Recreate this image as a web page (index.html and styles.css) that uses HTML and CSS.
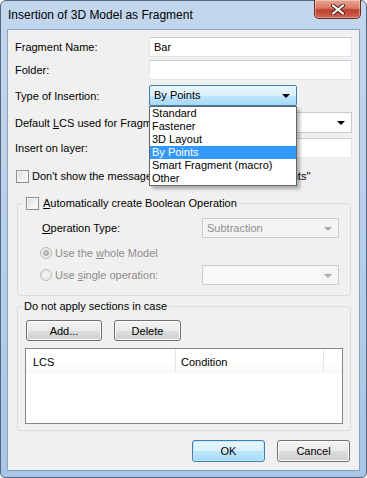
FILE: index.html
```html
<!DOCTYPE html>
<html lang="en">
<head>
  <meta charset="UTF-8" />
  <title>Insertion of 3D Model as Fragment</title>
  <link rel="stylesheet" href="styles.css">
</head>
<body>
  <div class="window">
    <!-- Title bar -->
    <div class="titlebar">
      <span class="title">Insertion of 3D Model as Fragment</span>
      <button class="close" aria-label="Close">
        <svg width="14" height="11" viewBox="0 0 14 11">
          <path d="M2 1.5L12 9.5M12 1.5L2 9.5" stroke="#4a1f1a" stroke-width="4" stroke-linecap="round"/>
          <path d="M2 1.5L12 9.5M12 1.5L2 9.5" stroke="#fff" stroke-width="2.2" stroke-linecap="round"/>
        </svg>
      </button>
    </div>

    <!-- Client area -->
    <div class="client">
      <div class="row r1">
        <label class="lbl">Fragment Name:</label>
        <div class="edit">Bar</div>
      </div>
      <div class="row r2">
        <label class="lbl">Folder:</label>
        <div class="edit"></div>
      </div>
      <div class="row r3">
        <label class="lbl">Type of Insertion:</label>
        <div class="combo-wrap">
          <div class="combo hot">By Points<span class="arrow"></span></div>
          <ul class="droplist">
            <li>Standard</li>
            <li>Fastener</li>
            <li>3D Layout</li>
            <li class="sel">By Points</li>
            <li>Smart Fragment (macro)</li>
            <li>Other</li>
          </ul>
        </div>
      </div>
      <div class="row r4">
        <label class="lbl">Default <u>L</u>CS used for Fragment:</label>
        <div class="combo plain"><span class="arrow"></span></div>
      </div>
      <div class="row r5">
        <label class="lbl">Insert on layer:</label>
        <div class="edit"></div>
      </div>
      <div class="row chkrow">
        <span class="check"></span>
        <span>Don't show the message "Fragment is inserted by points"</span>
      </div>

      <!-- Boolean operation group -->
      <div class="group g1">
        <div class="gtitle"><span class="check"></span><span><u>A</u>utomatically create Boolean Operation</span></div>
        <div class="grow optype">
          <span class="glbl"><u>O</u>peration Type:</span>
          <div class="combo dis">Subtraction<span class="arrow"></span></div>
        </div>
        <div class="grow radrow whole">
          <span class="radio on"></span>
          <span class="glbl2">Use the <u>w</u>hole Model</span>
        </div>
        <div class="grow radrow single">
          <span class="radio"></span>
          <span class="glbl2">Use <u>s</u>ingle operation:</span>
          <div class="combo dis dis2"><span class="field"></span><span class="arrow"></span></div>
        </div>
      </div>

      <!-- Sections group -->
      <div class="group g2">
        <div class="gtitle plain-title">Do not apply sections in case</div>
        <div class="btnrow">
          <button class="btn add">Add...</button>
          <button class="btn del">Delete</button>
        </div>
        <div class="listview">
          <div class="lvhead">
            <span class="col c1">LCS</span>
            <span class="col c2">Condition</span>
            <span class="col c3"></span>
          </div>
        </div>
      </div>

      <div class="footer">
        <button class="btn ok">OK</button>
        <button class="btn">Cancel</button>
      </div>
    </div>
  </div>
</body>
</html>
```

FILE: styles.css
```css
*{box-sizing:border-box;margin:0;padding:0}
body{
  width:367px;height:478px;overflow:hidden;
  font-family:'Liberation Sans',Arial,sans-serif;
  font-size:11px;color:#000;background:#fff;
}
u{text-decoration:underline;text-underline-offset:1px}

/* ── Window frame ─────────────────────────── */
.window{
  width:367px;height:478px;
  display:flex;flex-direction:column;
  border:1px solid #56687f;
  border-radius:6px 6px 5px 5px;
  background:linear-gradient(180deg,#c2d7ee 0,#b9d1ea 40%,#a9c5e6 100%);
}
.titlebar{
  height:28px;flex-shrink:0;
  display:flex;justify-content:space-between;align-items:flex-start;
}
.title{font-size:12px;padding:7px 0 0 7px}
.close{
  width:47px;height:19px;margin:-1px 5px 0 0;
  border:1px solid #6f2a22;border-top:none;
  border-radius:0 0 5px 5px;
  background:linear-gradient(180deg,#e8a493 0,#d97965 45%,#c0402e 55%,#d26450 100%);
  box-shadow:inset 0 0 0 1px rgba(255,255,255,.35);
  display:flex;align-items:center;justify-content:center;
}
.close svg{display:block}

.client{
  flex:1;margin:0 6px 6px 6px;
  border:1px solid #8ca2bd;
  background:#f0f0f0;
  padding:7px 7px 0 7px;
  position:relative;
}

/* ── Form rows ────────────────────────────── */
.row{display:flex;align-items:center}
.lbl{width:134px;flex-shrink:0;white-space:nowrap;overflow:hidden}
.r1{height:20px}
.r2{height:20px;margin-top:3px}
.r3{height:21px;margin-top:5px;position:relative;z-index:5}
.r4{height:21px;margin-top:6px}
.r5{height:20px;margin-top:5px}
.chkrow{height:20px;margin-top:8px;padding-left:1px;gap:3px;white-space:nowrap}

.edit{
  width:203px;height:100%;
  background:#fff;
  border:1px solid #e1e6ec;border-top-color:#c9ced6;
  padding:3px 4px;line-height:13px;
}

.combo{
  position:relative;height:100%;
  border:1px solid #c7ccd2;
  background:#fff;
  padding:3px 4px;line-height:13px;
}
.combo .arrow{
  position:absolute;right:6px;top:8px;
  border-left:4px solid transparent;border-right:4px solid transparent;
  border-top:4px solid #000;
}
.combo-wrap{position:relative;width:148px;height:100%}
.combo.hot{
  width:148px;
  border-color:#3c7fb1;border-radius:2px;
  background:linear-gradient(180deg,#eaf6fd 0,#d9f0fc 50%,#bee6fd 51%,#a7d9f5 100%);
}
.combo.plain{width:203px}
.combo.dis{width:137px;background:#f4f4f4;border-color:#c9cdd1;color:#8d8d8d}
.combo.dis .arrow{border-top-color:#a9a9a9}
.combo.dis2{padding:1px}
.combo.dis2 .field{display:block;width:117px;height:100%;background:#f9f9f9}

/* ── Dropdown list (open) ─────────────────── */
.droplist{
  position:absolute;left:0;top:21px;
  width:148px;height:80px;
  list-style:none;background:#fff;
  border:1px solid #646464;
  box-shadow:3px 3px 3px rgba(0,0,0,.28);
  line-height:13px;
}
.droplist li{padding-left:2px;height:13px;white-space:nowrap}
.droplist li.sel{background:#3399ff;color:#fff}

/* ── Check / radio ────────────────────────── */
.check{
  width:13px;height:13px;flex-shrink:0;display:inline-block;
  border:1px solid #8e8f8f;
  background:linear-gradient(135deg,#dcdcdc 0,#f5f5f5 70%,#fff 100%);
  box-shadow:inset 0 0 0 1px #f4f4f4;
}
.radio{
  width:12px;height:12px;flex-shrink:0;display:inline-block;
  border:1px solid #b9b9b9;border-radius:50%;
  background:radial-gradient(circle,#f4f4f4 0,#e6e6e6 100%);
  position:relative;
}
.radio.on::after{
  content:"";position:absolute;left:2px;top:2px;width:6px;height:6px;
  border-radius:50%;background:radial-gradient(circle at 40% 40%,#c9c9c9,#9d9d9d);
}

/* ── Group boxes ──────────────────────────── */
.group{
  margin:0 1px 0 2px;
  border:1px solid #d5dfe5;border-radius:3px;
}
.g1{margin-top:17px;padding-bottom:10px}
.g2{margin-top:10px;padding-bottom:6px}
.gtitle{
  display:flex;align-items:center;gap:4px;width:max-content;
  height:14px;margin:-8px 0 0 5px;padding:0 3px;
  background:#f0f0f0;white-space:nowrap;
}
.plain-title{margin-left:4px;padding:0 2px}
.grow{display:flex;align-items:center}
.optype{height:20px;margin-top:8px;padding-left:24px}
.glbl{width:160px}
.radrow{padding-left:22px;color:#8d8d8d}
.radrow .glbl2{margin-left:3px;width:147px}
.whole{height:16px;margin-top:7px}
.single{height:20px;margin-top:4px}

/* ── Buttons ──────────────────────────────── */
.btn{
  font:inherit;color:#000;
  height:21px;
  border:1px solid #707070;border-radius:3px;
  background:linear-gradient(180deg,#f2f2f2 0,#ebebeb 50%,#dddddd 51%,#cfcfcf 100%);
  box-shadow:inset 0 0 0 1px #fcfcfc;
}
.btnrow{display:flex;gap:12px;padding-left:8px;margin-top:7px}
.add{width:76px}
.del{width:67px}

.listview{
  margin:7px 0 0 7px;width:318px;height:76px;
  background:#fff;border:1px solid #828790;
}
.lvhead{display:flex;height:24px}
.col{border-right:1px solid #e5e5e5;padding:2px 0 0 7px;line-height:22px;
  background:linear-gradient(180deg,#fff 0,#fff 60%,#f7f8f9 100%)}
.c1{width:150px}
.c2{width:148px;padding-left:5px}
.c3{flex:1;border-right:none}

.footer{display:flex;justify-content:flex-end;gap:12px;margin-top:9px;padding-right:2px}
.footer .btn{width:73px;height:22px}
.ok{
  border-color:#3c7fb1;
  background:linear-gradient(180deg,#eaf6fd 0,#d9f0fc 50%,#bee6fd 51%,#a7d9f5 100%);
  box-shadow:inset 0 0 0 1px #c5e7fb;
}
```
